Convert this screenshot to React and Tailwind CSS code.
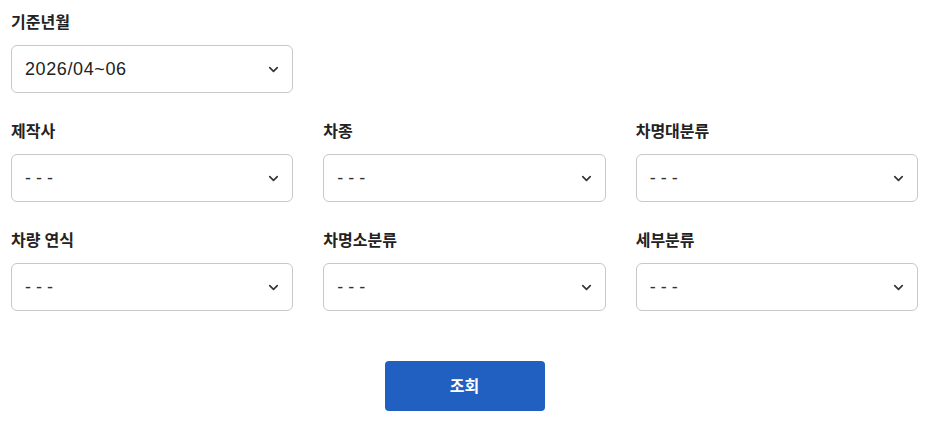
import { ChevronDown } from 'lucide-react';

const ROWS = [
  [{ label: '제작사' }, { label: '차종' }, { label: '차명대분류' }],
  [{ label: '차량 연식' }, { label: '차명소분류' }, { label: '세부분류' }],
];

function Select({ value, dashed }) {
  return (
    <div
      className="flex h-[48px] items-center justify-between rounded-[6px] border border-[#c8c8c8] bg-white pl-[13px] pr-[11px]"
      style={{ fontFamily: '"Liberation Sans", Arial, sans-serif' }}
    >
      {dashed ? (
        <span className="text-[18px] text-[#333]">- - -</span>
      ) : (
        <span className="text-[18px] tracking-[0.6px] text-[#222]">{value}</span>
      )}
      <ChevronDown size={15} strokeWidth={2.6} className="text-[#333]" />
    </div>
  );
}

function Field({ label, value, dashed = true }) {
  return (
    <div className="flex flex-col">
      <div className="text-[16px] font-bold leading-[22px] text-[#222]">{label}</div>
      <div className="mt-3">
        <Select value={value} dashed={dashed} />
      </div>
    </div>
  );
}

export default function App() {
  return (
    <div
      className="min-h-[421px] w-[940px] bg-white pl-[11px] pr-[22px] pt-[11px]"
      style={{ fontFamily: '"Noto Sans", "Noto Sans CJK KR", sans-serif' }}
    >
      <div className="grid grid-cols-3 gap-x-[30px]">
        <Field label="기준년월" value="2026/04~06" dashed={false} />
      </div>

      {ROWS.map((row, i) => (
        <div key={i} className="mt-[27px] grid grid-cols-3 gap-x-[30px]">
          {row.map((f) => (
            <Field key={f.label} label={f.label} />
          ))}
        </div>
      ))}

      <div className="mt-[50px] flex justify-center">
        <button className="h-[50px] w-[160px] rounded-[4px] bg-[#215fc0] text-[16px] font-bold text-white">
          조회
        </button>
      </div>
    </div>
  );
}
